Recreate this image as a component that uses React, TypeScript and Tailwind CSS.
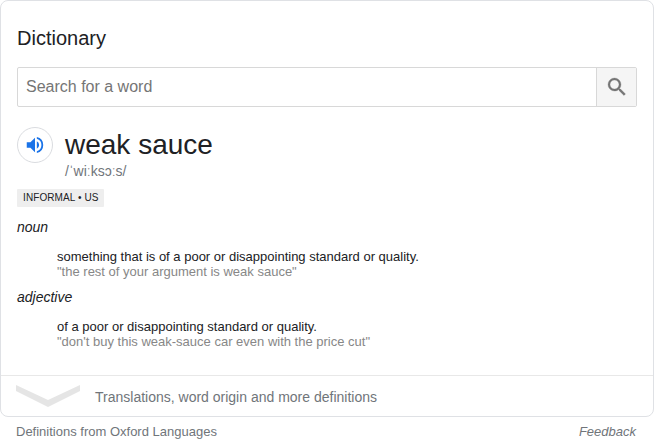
export default function App() {
  return (
    <div className="h-[443px] w-[659px] overflow-hidden bg-white font-['Liberation_Sans',Arial,sans-serif] text-[#202124]">
      <main className="flex h-[417px] w-[654px] flex-col rounded-lg border border-[#dfe1e5]">
        <h1 className="mt-[23px] ml-4 text-[20px] leading-[28px]">Dictionary</h1>
        <div className="mt-[15px] ml-4 flex h-10 w-[620px] shrink-0 rounded-[2px] border border-[#d8d8d8]">
          <input
            aria-label="Search for a word"
            placeholder="Search for a word"
            className="min-w-0 flex-1 px-2 pb-px text-[16px] outline-none placeholder:text-[#757575]"
          />
          <button aria-label="Search" className="flex w-10 items-center justify-center border-l border-[#d8d8d8] bg-[#f5f5f5]">
            <svg viewBox="0 0 24 24" className="size-6 fill-[#757575] stroke-[#757575] stroke-[0.3]">
              <path d="M15.5 14h-.79l-.28-.27A6.47 6.47 0 0 0 16 9.5 6.5 6.5 0 1 0 9.5 16c1.61 0 3.09-.59 4.23-1.57l.27.28v.79l5 4.99L20.49 19l-4.99-5zm-6 0C7.01 14 5 11.99 5 9.5S7.01 5 9.5 5 14 7.01 14 9.5 11.99 14 9.5 14z" />
            </svg>
          </button>
        </div>
        <section className="mt-5 ml-4 flex h-[54px] shrink-0">
          <button aria-label="Listen" className="flex size-9 items-center justify-center rounded-full border border-[#dadce0]">
            <svg viewBox="0 0 24 24" className="size-[22px] fill-[#1a73e8]">
              <path d="M3 9v6h4l5 5V4L7 9H3zm13.5 3A4.5 4.5 0 0 0 14 7.97v8.05A4.5 4.5 0 0 0 16.5 12zM14 3.23v2.06a7.003 7.003 0 0 1 0 13.42v2.06a9.005 9.005 0 0 0 0-17.54z" />
            </svg>
          </button>
          <div className="ml-3">
            <h2 className="mt-px text-[28px] leading-[34px]">weak sauce</h2>
            <p className="text-[14px] leading-[18px] text-[#70757a]">/ˈwiːksɔːs/</p>
          </div>
        </section>
        <div className="mt-2 ml-4 flex h-[18px] w-[87px] shrink-0 items-center rounded-[1px] bg-[#eeeeee] pb-px pl-1.5 text-[10px] tracking-[0.1px] whitespace-nowrap">INFORMAL • US</div>
        <p className="mt-[11px] ml-4 text-[14px] leading-[18px] italic">noun</p>
        <div className="mt-[13px] ml-14 text-[13px] leading-[15px]">
          <p>something that is of a poor or disappointing standard or quality.</p>
          <p className="text-[#878787]">"the rest of your argument is weak sauce"</p>
        </div>
        <p className="mt-[9px] ml-4 text-[14px] leading-[18px] italic">adjective</p>
        <div className="mt-[13px] ml-14 text-[13px] leading-[15px]">
          <p>of a poor or disappointing standard or quality.</p>
          <p className="text-[#878787]">"don't buy this weak-sauce car even with the price cut"</p>
        </div>
        <div className="mt-auto flex h-[41px] shrink-0 items-center border-t border-[#e8e8e8] pl-[15px] text-[14px] text-[#70757a]">
          <svg viewBox="0 0 64 22" className="h-[22px] w-16 fill-[#e5e5e5]">
            <path d="M0 0L32 15L64 0V6L32 22L0 6Z" />
          </svg>
          <span className="ml-[15px] pt-0.5">Translations, word origin and more definitions</span>
        </div>
      </main>
      <footer className="flex h-[26px] w-[636px] items-center justify-between pt-[3px] pl-4 text-[13px] text-[#70757a]">
        <span>Definitions from Oxford Languages</span>
        <span className="italic">Feedback</span>
      </footer>
    </div>
  );
}
